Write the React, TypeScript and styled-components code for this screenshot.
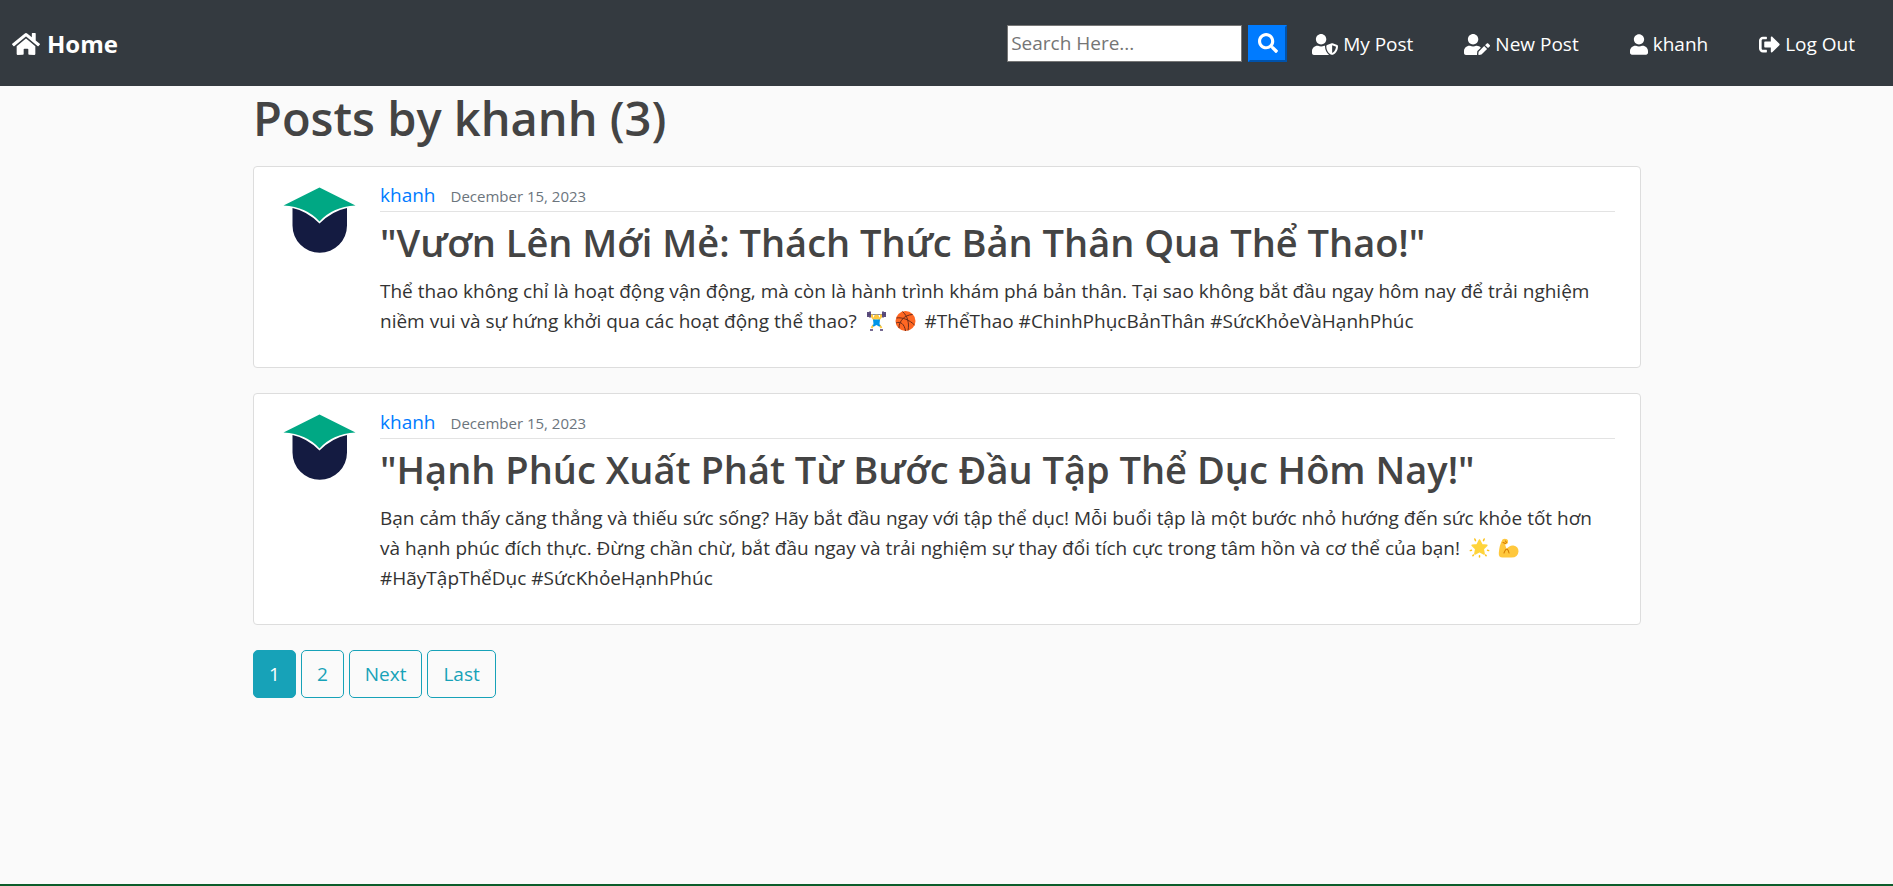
import React from 'react';
import styled, { createGlobalStyle, css } from 'styled-components';
import { FaHome, FaSearch, FaSignOutAlt, FaUser, FaUserEdit, FaUserShield } from 'react-icons/fa';

const GlobalStyle = createGlobalStyle`
  *, *::before, *::after { box-sizing: border-box; }
  body {
    margin: 0;
    background: #fafafa;
    color: #333;
    font-family: "Segoe UI", "Open Sans", "Noto Sans", sans-serif;
    font-size: 19px;
    line-height: 30px;
  }
  a { text-decoration: none; }
`;

const Page = styled.div`
  display: flex;
  flex-direction: column;
  min-height: 100vh;
`;

const Navbar = styled.header`
  display: flex;
  align-items: center;
  justify-content: space-between;
  min-height: 86px;
  padding: 0 38px 0 12px;
  background: #343a40;
`;

const Brand = styled.a`
  display: flex;
  align-items: center;
  gap: 7px;
  padding-top: 2px;
  color: #fff;
  font-size: 24px;
  font-weight: 700;
  svg { width: 28px; height: 26px; }
`;

const NavItems = styled.nav`
  display: flex;
  align-items: center;
`;

const SearchForm = styled.form`
  display: flex;
  gap: 6px;
  margin-right: 25px;
`;

const SearchInput = styled.input`
  width: 235px;
  height: 37px;
  padding: 1px 3px;
  border: 1px solid #767676;
  background: #fff;
  font: inherit;
  &::placeholder { color: #757575; opacity: 1; }
`;

const SearchButton = styled.button`
  display: flex;
  align-items: center;
  justify-content: center;
  width: 39px;
  height: 37px;
  padding: 0;
  border: 2px outset #007bff;
  background: #007bff;
  color: #fff;
  font-size: 20px;
`;

const NavLink = styled.a<{ $iconWidth: number }>`
  display: flex;
  align-items: center;
  gap: 5px;
  padding-top: 2px;
  color: #fff;
  & + & { margin-left: 51px; }
  svg { width: ${(p) => p.$iconWidth}px; height: 21px; }
`;

const Main = styled.main`
  flex: 1;
  width: 100%;
  max-width: 1425px;
  margin: 0 auto;
  padding: 0 18px 0 19px;
`;

const PageTitle = styled.h1`
  margin: 2px 0 18px;
  color: #444;
  font-size: 47px;
  font-weight: 600;
  line-height: 60px;
`;

const Card = styled.article`
  display: flex;
  align-items: flex-start;
  gap: 20px;
  margin-bottom: 25px;
  padding: 13px 25px 12px;
  border: 1px solid #ddd;
  border-radius: 4px;
  background: #fff;
`;

const Avatar = styled.svg`
  flex: none;
  width: 81px;
  height: 81px;
`;

const CardBody = styled.div`
  flex: 1;
  min-width: 0;
`;

const Meta = styled.div`
  display: flex;
  align-items: baseline;
  gap: 15px;
  margin-bottom: 6px;
  border-bottom: 1px solid #e3e3e3;
`;

const Author = styled.a`
  color: #007bff;
`;

const PostDate = styled.small`
  color: #6c757d;
  font-size: 15px;
`;

const PostTitle = styled.h2`
  margin: 0 0 10px;
  color: #444;
  font-size: 38px;
  font-weight: 600;
  line-height: 48px;
`;

const PostText = styled.p`
  margin: 0 0 19px;
`;

const EmojiSvg = styled.svg`
  width: 21px;
  height: 20px;
  margin: 0 4px;
  vertical-align: -3px;
`;

const Pagination = styled.nav`
  display: flex;
  gap: 5px;
  margin-bottom: 20px;
`;

const PageLink = styled.a<{ $active?: boolean }>`
  padding: 8px 15px;
  border: 1px solid #17a2b8;
  border-radius: 5px;
  color: #17a2b8;
  ${(p) => p.$active && css`
    background: #17a2b8;
    color: #fff;
  `}
`;

const Footer = styled.footer`
  height: 2px;
  background: #0b5d2a;
`;

const Graduate = () => (
  <Avatar viewBox="0 0 81 81" role="img" aria-label="Profile picture">
    <path d="M13.500 28Q28 31 40.500 43.500Q53 31 68 28V45.500A27.200 27.200 0 0 1 13.500 45.500Z" fill="#141b41" />
    <path d="M40.500 7.500L76.500 25.500Q53 27 40.500 41.500Q28 27 4.500 25.500Z" fill="#00a884" />
  </Avatar>
);

const WeightLifter = () => (
  <EmojiSvg viewBox="0 0 20 20" role="img" aria-label="Person lifting weights">
    <path d="M1 3.500H19" stroke="#8a8f99" strokeWidth="1" />
    <path d="M1.500 1V6M3.500 .5V6.500M16.500 .5V6.500M18.500 1V6" stroke="#4b3b70" strokeWidth="1.800" />
    <path d="M5.500 3.500V6L8 9M14.500 3.500V6L12 9M7 14L5 17M13 14L15 17" fill="none" stroke="#ffc83d" strokeWidth="2" />
    <circle cx="10" cy="6" r="2.600" fill="#ffc83d" />
    <path d="M6.500 8.500H13.500L13 13L14 15L12.500 15.500L10 14L7.500 15.500L6 15L7 13Z" fill="#0095e8" />
    <path d="M3.500 19H6.500M13.500 19H16.500" stroke="#4b3b70" strokeWidth="1.600" />
  </EmojiSvg>
);

const Basketball = () => (
  <EmojiSvg viewBox="0 0 20 20" role="img" aria-label="Basketball">
    <circle cx="10" cy="10" r="10" fill="#ff6723" />
    <path d="M1 7C7 6 14 9 19 14M7 .5C12 5 14 12 12.500 19.500M3.500 17C3.500 10 9 4 17 3.500M.5 12C5 10 9 13 10 20" fill="none" stroke="#6a2c1b" strokeWidth="1" />
  </EmojiSvg>
);

const GlowingStar = () => (
  <EmojiSvg viewBox="0 0 20 20" role="img" aria-label="Glowing star">
    <path d="M10 2L12.300 6.700L17.300 7.400L13.700 11L14.600 16L10 13.600L5.400 16L6.300 11L2.700 7.400L7.700 6.700Z" fill="#ffd43b" stroke="#ffd43b" strokeWidth="1.600" strokeLinejoin="round" />
    <path d="M5.300 1L6 2.600M14.700 1L14 2.600M.8 12.600L2 12.200M19.200 12.600L18 12.200M10 17.800V19M3.400 17.600L4 17M16.600 17.600L16 17" stroke="#fcc21b" strokeWidth="1.500" strokeLinecap="round" />
  </EmojiSvg>
);

const FlexedArm = () => (
  <EmojiSvg viewBox="0 0 20 20" role="img" aria-label="Flexed biceps">
    <path d="M4 1.500Q6 0 8.500 1.200Q10 2 9.500 4.500Q9 6.500 7 6.500L6.500 6.300L8 11Q11 7 15 7.500Q20 8.500 20 13.500Q19.500 19.500 13 19.500H4Q0 19.500 .3 15Q.8 7 4 1.500Z" fill="#ffc83d" />
    <path d="M4.500 4.500L7 5.500M7 3L8 4.500M5.500 15Q7 11 8.500 11Q10 12 10.500 15" fill="none" stroke="#d67d00" strokeWidth="1.100" strokeLinecap="round" />
  </EmojiSvg>
);

type Post = { title: string; body: React.ReactNode };

const posts: Post[] = [
  {
    title: '"Vươn Lên Mới Mẻ: Thách Thức Bản Thân Qua Thể Thao!"',
    body: (
      <>
        Thể thao không chỉ là hoạt động vận động, mà còn là hành trình khám phá bản thân. Tại sao không bắt đầu
        ngay hôm nay để trải nghiệm niềm vui và sự hứng khởi qua các hoạt động thể thao? <WeightLifter />
        <Basketball /> #ThểThao #ChinhPhụcBảnThân #SứcKhỏeVàHạnhPhúc
      </>
    ),
  },
  {
    title: '"Hạnh Phúc Xuất Phát Từ Bước Đầu Tập Thể Dục Hôm Nay!"',
    body: (
      <>
        Bạn cảm thấy căng thẳng và thiếu sức sống? Hãy bắt đầu ngay với tập thể dục! Mỗi buổi tập là một bước nhỏ
        hướng đến sức khỏe tốt hơn và hạnh phúc đích thực. Đừng chần chừ, bắt đầu ngay và trải nghiệm sự thay đổi
        tích cực trong tâm hồn và cơ thể của bạn! <GlowingStar />
        <FlexedArm /> #HãyTậpThểDục #SứcKhỏeHạnhPhúc
      </>
    ),
  },
];

export default function App() {
  return (
    <Page>
      <GlobalStyle />
      <Navbar>
        <Brand href="#home"><FaHome />Home</Brand>
        <NavItems aria-label="Main">
          <SearchForm role="search" onSubmit={(e) => e.preventDefault()}>
            <SearchInput type="text" name="q" placeholder="Search Here..." aria-label="Search posts" />
            <SearchButton type="submit" aria-label="Search"><FaSearch /></SearchButton>
          </SearchForm>
          <NavLink href="#my-posts" $iconWidth={26}><FaUserShield />My Post</NavLink>
          <NavLink href="#new-post" $iconWidth={26}><FaUserEdit />New Post</NavLink>
          <NavLink href="#profile" $iconWidth={18}><FaUser />khanh</NavLink>
          <NavLink href="#logout" $iconWidth={21}><FaSignOutAlt />Log Out</NavLink>
        </NavItems>
      </Navbar>
      <Main>
        <PageTitle>Posts by khanh (3)</PageTitle>
        {posts.map((post) => (
          <Card key={post.title}>
            <Graduate />
            <CardBody>
              <Meta>
                <Author href="#khanh">khanh</Author>
                <PostDate>December 15, 2023</PostDate>
              </Meta>
              <PostTitle>{post.title}</PostTitle>
              <PostText>{post.body}</PostText>
            </CardBody>
          </Card>
        ))}
        <Pagination aria-label="Pages">
          <PageLink href="#page-1" $active aria-current="page">1</PageLink>
          <PageLink href="#page-2">2</PageLink>
          <PageLink href="#next">Next</PageLink>
          <PageLink href="#last">Last</PageLink>
        </Pagination>
      </Main>
      <Footer />
    </Page>
  );
}
